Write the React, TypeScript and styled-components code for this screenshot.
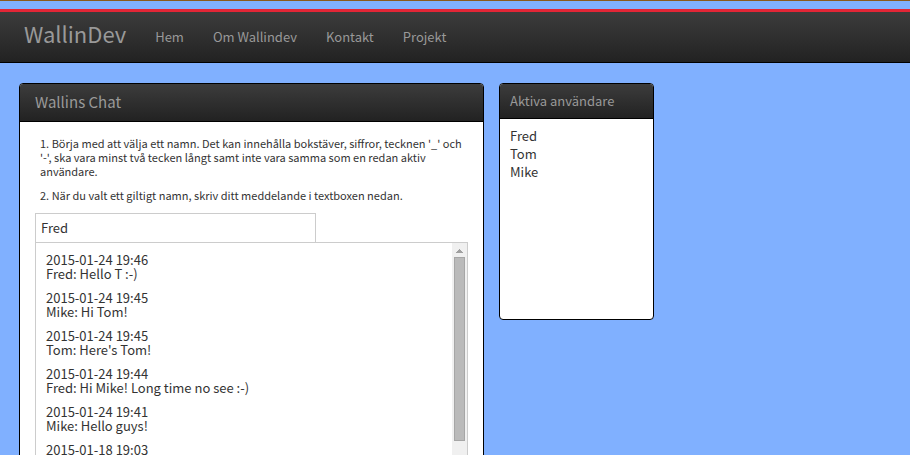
import React, { useState } from "react";
import styled, { createGlobalStyle } from "styled-components";

const GlobalStyle = createGlobalStyle`
  * { box-sizing: border-box; }
  html, body { margin: 0; background: #80b0ff; }
  body {
    border-top: 1px solid #8a5a1c;
    color: #333;
    font: 13px/18px "Noto Sans CJK SC", "Noto Sans", sans-serif;
  }
`;

const Page = styled.div`
  padding-top: 8px;
  height: calc(100vh - 1px);
  overflow: hidden;
`;

const Navbar = styled.nav`
  display: flex;
  align-items: center;
  height: 54px;
  padding: 0 24px;
  gap: 29px;
  border-top: 3px solid #e32636;
  border-bottom: 1px solid #000;
  background: linear-gradient(#3c3c3c, #222);
`;

const Brand = styled.a`
  color: #999;
  font-size: 22px;
  line-height: 30px;
  padding-bottom: 8px;
  text-decoration: none;
`;

const NavLink = styled.a`
  color: #999;
  text-decoration: none;
`;

const Content = styled.main`
  display: flex;
  align-items: flex-start;
  gap: 15px;
  padding: 20px 19px;
`;

const Panel = styled.section<{ $width: number }>`
  flex: 0 1 ${(p) => p.$width}px;
  min-width: 0;
  border: 1px solid #000;
  border-radius: 4px;
  background: #fff;
  overflow: hidden;
`;

const PanelTitle = styled.h2<{ $large?: boolean }>`
  margin: 0;
  padding: ${(p) => (p.$large ? "8px 15px 10px" : "8px 10px")};
  color: #999;
  background: linear-gradient(#3c3c3c, #222);
  border-bottom: 1px solid #000;
  font-size: ${(p) => (p.$large ? "15px" : "13px")};
  line-height: ${(p) => (p.$large ? "19px" : "18px")};
  font-weight: 400;
`;

const ChatBody = styled.div`
  padding: 14px 15px;
`;

const Instructions = styled.div`
  padding: 0 5px 1px;
  font-size: 11px;
  line-height: 14px;
`;

const Paragraph = styled.p`
  margin: 0 0 10px;
`;

const NameInput = styled.input`
  display: block;
  width: 281px;
  max-width: 100%;
  height: 29px;
  padding: 0 5px 2px;
  border: 1px solid #ccc;
  border-bottom: 0;
  border-radius: 0;
  outline: 0;
  color: inherit;
  font: inherit;
`;

const MessageBox = styled.div`
  display: flex;
  height: 300px;
  border: 1px solid #ccc;
`;

const MessageList = styled.ol`
  flex: 1;
  margin: 0;
  padding: 10px;
  list-style: none;
  overflow: hidden;
  line-height: 14px;
`;

const Message = styled.li`
  margin-bottom: 10px;
`;

const Timestamp = styled.time`
  display: block;
`;

const ScrollTrack = styled.div`
  display: flex;
  flex-direction: column;
  width: 15px;
  padding: 0 2px;
  background: #f0f0f0;
`;

const ScrollUp = styled.button`
  display: flex;
  justify-content: center;
  align-items: center;
  height: 14px;
  padding: 2px 0 0;
  border: 0;
  background: none;
`;

const ScrollThumb = styled.div`
  height: 184px;
  border: 1px solid #a6a6a6;
  background: #bababa;
`;

const UserList = styled.ul`
  min-height: 200px;
  margin: 0;
  padding: 8px 10px;
  list-style: none;
`;

const links = ["Hem", "Om Wallindev", "Kontakt", "Projekt"];
const users = ["Fred", "Tom", "Mike"];
const messages = [
  { time: "2015-01-24 19:46", text: "Fred: Hello T :-)" },
  { time: "2015-01-24 19:45", text: "Mike: Hi Tom!" },
  { time: "2015-01-24 19:45", text: "Tom: Here's Tom!" },
  { time: "2015-01-24 19:44", text: "Fred: Hi Mike! Long time no see :-)" },
  { time: "2015-01-24 19:41", text: "Mike: Hello guys!" },
  { time: "2015-01-18 19:03", text: "" },
];

export default function App() {
  const [name, setName] = useState("Fred");
  return (
    <>
      <GlobalStyle />
      <Page>
        <Navbar>
          <Brand href="#">WallinDev</Brand>
          {links.map((link) => (
            <NavLink key={link} href="#">{link}</NavLink>
          ))}
        </Navbar>
        <Content>
          <Panel $width={465}>
            <PanelTitle $large>Wallins Chat</PanelTitle>
            <ChatBody>
              <Instructions>
                <Paragraph>
                  1. Börja med att välja ett namn. Det kan innehålla bokstäver, siffror, tecknen '_' och
                  '-', ska vara minst två tecken långt samt inte vara samma som en redan aktiv användare.
                </Paragraph>
                <Paragraph>
                  2. När du valt ett giltigt namn, skriv ditt meddelande i textboxen nedan.
                </Paragraph>
              </Instructions>
              <NameInput aria-label="Namn" value={name} onChange={(e) => setName(e.target.value)} />
              <MessageBox>
                <MessageList>
                  {messages.map((message, index) => (
                    <Message key={index}>
                      <Timestamp>{message.time}</Timestamp>
                      {message.text}
                    </Message>
                  ))}
                </MessageList>
                <ScrollTrack>
                  <ScrollUp aria-label="Rulla upp">
                    <svg width="7" height="4" viewBox="0 0 7 4" shapeRendering="crispEdges">
                      <path d="M3 0h1v1h1v1h1v1h1v1H0V3h1V2h1V1h1z" fill="#a0a0a0" />
                    </svg>
                  </ScrollUp>
                  <ScrollThumb />
                </ScrollTrack>
              </MessageBox>
            </ChatBody>
          </Panel>
          <Panel $width={155}>
            <PanelTitle>Aktiva användare</PanelTitle>
            <UserList>
              {users.map((user) => (
                <li key={user}>{user}</li>
              ))}
            </UserList>
          </Panel>
        </Content>
      </Page>
    </>
  );
}
